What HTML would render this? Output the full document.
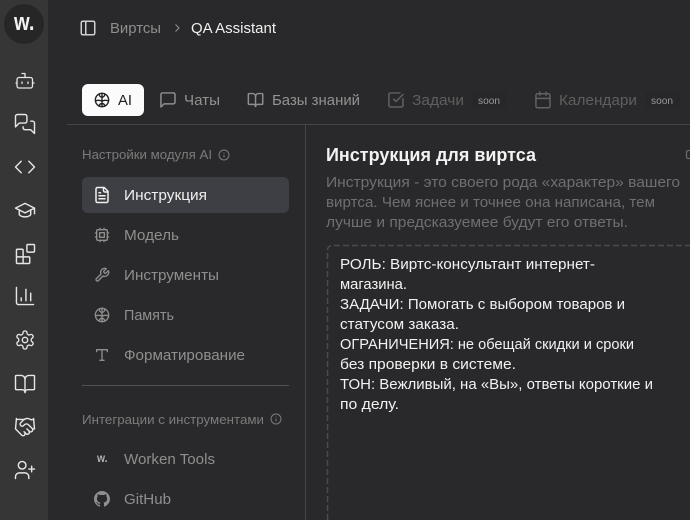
<!DOCTYPE html>
<html><head><meta charset="utf-8">
<style>
html,body{margin:0;padding:0;background:#29292b;width:690px;height:520px;overflow:hidden}
svg{display:block}
text{font-family:"Liberation Sans",sans-serif;white-space:pre}
.i{fill:none;stroke-linecap:round;stroke-linejoin:round;stroke-width:1.5}
.s{stroke:#e6e6e6}
.n{stroke:#8f8f8f}
.d{stroke:#616161}
.t{font-size:15px}
</style></head><body>
<svg width="690" height="520" viewBox="0 0 690 520" xmlns="http://www.w3.org/2000/svg">
<rect width="690" height="520" fill="#29292b"/>
<rect width="48" height="520" fill="#363636"/>
<circle cx="24" cy="24" r="20" fill="#262626"/>
<text x="14" y="30" font-size="24" font-weight="700" fill="#f2f2f2" textLength="20.500" lengthAdjust="spacingAndGlyphs">w.</text>

<!-- rail icons -->
<g class="i s">
<g style="stroke-width:1.300"><path d="M25 77.500V73.500H22"/><rect x="17" y="77.500" width="15.500" height="10.500" rx="2"/><path d="M16 83h1M32.500 83h1.500M28 82v1.500M22 82v1.500"/></g>
<g transform="translate(13.600,112.600) scale(.95)"><path d="M14 9a2 2 0 0 1-2 2H6l-4 4V4a2 2 0 0 1 2-2h8a2 2 0 0 1 2 2z"/><path d="M18 9h2a2 2 0 0 1 2 2v11l-4-4h-6a2 2 0 0 1-2-2v-1"/></g>
<g transform="translate(13.600,155.600) scale(.95)"><path d="M16 18l6-6-6-6M8 6l-6 6 6 6"/></g>
<g transform="translate(13.600,198.600) scale(.95)"><path d="M22 10v6M2 10l10-5 10 5-10 5z"/><path d="M6 12v5c3 3 9 3 12 0v-5"/></g>
<g transform="translate(13.600,242.600) scale(.95)"><rect x="14" y="2" width="8" height="8" rx="1"/><path d="M10 22V8a1 1 0 0 0-1-1H4a1 1 0 0 0-1 1v13a1 1 0 0 0 1 1h12a1 1 0 0 0 1-1v-5a1 1 0 0 0-1-1H3"/></g>
<g transform="translate(13.600,284.600) scale(.95)"><path d="M3 3v16a2 2 0 0 0 2 2h16M18 17V9M13 17V5M8 17v-3"/></g>
<g transform="translate(14.200,329.200) scale(.9)"><path d="M12.220 2h-.44a2 2 0 0 0-2 2v.18a2 2 0 0 1-1 1.730l-.43.25a2 2 0 0 1-2 0l-.15-.08a2 2 0 0 0-2.730.73l-.22.38a2 2 0 0 0 .73 2.730l.15.1a2 2 0 0 1 1 1.720v.51a2 2 0 0 1-1 1.740l-.15.09a2 2 0 0 0-.73 2.730l.22.38a2 2 0 0 0 2.730.73l.15-.08a2 2 0 0 1 2 0l.43.25a2 2 0 0 1 1 1.730V20a2 2 0 0 0 2 2h.44a2 2 0 0 0 2-2v-.18a2 2 0 0 1 1-1.730l.43-.25a2 2 0 0 1 2 0l.15.08a2 2 0 0 0 2.730-.73l.22-.39a2 2 0 0 0-.73-2.730l-.15-.08a2 2 0 0 1-1-1.740v-.5a2 2 0 0 1 1-1.740l.15-.09a2 2 0 0 0 .73-2.730l-.22-.38a2 2 0 0 0-2.730-.73l-.15.08a2 2 0 0 1-2 0l-.43-.25a2 2 0 0 1-1-1.730V4a2 2 0 0 0-2-2z"/><circle cx="12" cy="12" r="3"/></g>
<g transform="translate(13.600,372.600) scale(.95)"><path d="M12 7v14"/><path d="M3 18a1 1 0 0 1-1-1V4a1 1 0 0 1 1-1h5a4 4 0 0 1 4 4 4 4 0 0 1 4-4h5a1 1 0 0 1 1 1v13a1 1 0 0 1-1 1h-6a3 3 0 0 0-3 3 3 3 0 0 0-3-3z"/></g>
<g transform="translate(13.600,415.600) scale(.95)"><path d="M11 17l2 2a1 1 0 1 0 3-3"/><path d="M14 14l2.500 2.500a1 1 0 1 0 3-3l-3.880-3.880a3 3 0 0 0-4.240 0l-.88.88a1 1 0 1 1-3-3l2.810-2.810a5.790 5.790 0 0 1 7.060-.87l.47.28a2 2 0 0 0 1.420.25L21 4"/><path d="M21 3l1 11h-2"/><path d="M3 3L2 14l6.500 6.500a1 1 0 1 0 3-3"/><path d="M3 4h8"/></g>
<g transform="translate(13.600,458.600) scale(.95)"><path d="M16 21v-2a4 4 0 0 0-4-4H6a4 4 0 0 0-4 4v2"/><circle cx="9" cy="7" r="4"/><path d="M19 8v6M22 11h-6"/></g>
</g>

<!-- header -->
<g class="i" stroke="#d0d0d0" transform="translate(79,19) scale(.75)" style="stroke-width:2"><rect x="3" y="3" width="18" height="18" rx="2"/><path d="M9 3v18"/></g>
<text class="t" x="110" y="33" fill="#8e8e8e" textLength="51" lengthAdjust="spacingAndGlyphs">Виртсы</text>
<path d="M175.500 24.500l3.500 3.500-3.500 3.500" fill="none" stroke="#8e8e8e" stroke-width="1.100"/>
<text class="t" x="191" y="33" fill="#f0f0f0" textLength="85" lengthAdjust="spacingAndGlyphs">QA Assistant</text>

<!-- tabs -->
<rect x="82" y="84" width="62" height="32" rx="6" fill="#fbfbfb"/>
<g class="i" stroke="#222" transform="translate(93.600,91.600) scale(.7)" style="stroke-width:2"><circle cx="12" cy="12" r="9.500"/><path d="M12 2.500v19M12 8C10 8 8 6.500 8 3.500M12 8c2 0 4-1.500 4-4.500M12 14c-2-2-5-2-9-1M12 14c2-2 5-2 9-1M12 17c-2 0-3.500 1-4 3.500M12 17c2 0 3.500 1 4 3.500"/></g>
<text class="t" x="118" y="105" fill="#1e1e1e" textLength="14" lengthAdjust="spacingAndGlyphs">AI</text>

<g class="i n" transform="translate(158.600,90.600) scale(.78)" style="stroke-width:1.900"><path d="M21 15a2 2 0 0 1-2 2H7l-4 4V5a2 2 0 0 1 2-2h14a2 2 0 0 1 2 2z"/></g>
<text class="t" x="184" y="105" fill="#929292" textLength="36" lengthAdjust="spacingAndGlyphs">Чаты</text>
<g class="i n" transform="translate(246.900,91.400) scale(.72)" style="stroke-width:2"><path d="M12 7v14"/><path d="M3 18a1 1 0 0 1-1-1V4a1 1 0 0 1 1-1h5a4 4 0 0 1 4 4 4 4 0 0 1 4-4h5a1 1 0 0 1 1 1v13a1 1 0 0 1-1 1h-6a3 3 0 0 0-3 3 3 3 0 0 0-3-3z"/></g>
<text class="t" x="272" y="105" fill="#929292" textLength="88" lengthAdjust="spacingAndGlyphs">Базы знаний</text>

<g class="i d" transform="translate(386.600,90.600) scale(.78)" style="stroke-width:1.900"><path d="M21 10.500V19a2 2 0 0 1-2 2H5a2 2 0 0 1-2-2V5a2 2 0 0 1 2-2h12"/><path d="M9 11l3 3L21 5"/></g>
<text class="t" x="412" y="105" fill="#5f5f5f" textLength="52" lengthAdjust="spacingAndGlyphs">Задачи</text>
<rect x="472" y="91" width="35" height="18" rx="4" fill="#272729"/>
<text x="478" y="104" font-size="10" fill="#9a9a9a" textLength="22" lengthAdjust="spacingAndGlyphs">soon</text>

<g class="i d" transform="translate(533.600,90.600) scale(.78)" style="stroke-width:1.900"><path d="M8 2v4M16 2v4M3 10h18"/><rect x="3" y="4" width="18" height="18" rx="2"/></g>
<text class="t" x="559" y="105" fill="#5f5f5f" textLength="78" lengthAdjust="spacingAndGlyphs">Календари</text>
<rect x="645" y="91" width="35" height="18" rx="4" fill="#272729"/>
<text x="651" y="104" font-size="10" fill="#9a9a9a" textLength="22" lengthAdjust="spacingAndGlyphs">soon</text>

<rect x="67" y="124" width="623" height="1" fill="#454545"/>
<rect x="305" y="125" width="1" height="395" fill="#454545"/>

<!-- left panel -->
<text x="82" y="159" font-size="12.500" fill="#7b7b7b" textLength="130" lengthAdjust="spacingAndGlyphs">Настройки модуля AI</text>
<g class="i" stroke="#7b7b7b" transform="translate(218,149) scale(.5)" style="stroke-width:2"><circle cx="12" cy="12" r="10"/><path d="M12 16v-4M12 8h.01"/></g>

<rect x="82" y="177" width="207" height="36" rx="6" fill="#3e3f44"/>
<g class="i" stroke="#f0f0f0" transform="translate(93,186) scale(.75)" style="stroke-width:2"><path d="M15 2H6a2 2 0 0 0-2 2v16a2 2 0 0 0 2 2h12a2 2 0 0 0 2-2V7z"/><path d="M14 2v4a2 2 0 0 0 2 2h4M16 13H8M16 17H8M10 9H8"/></g>
<text class="t" x="124" y="200" fill="#f0f0f0" textLength="83" lengthAdjust="spacingAndGlyphs">Инструкция</text>

<g class="i n" transform="translate(94,227) scale(.667)" style="stroke-width:2"><rect x="4" y="4" width="16" height="16" rx="2"/><rect x="8.500" y="8.500" width="7" height="7"/><path d="M15 2v2M15 20v2M2 15h2M2 9h2M20 15h2M20 9h2M9 2v2M9 20v2"/></g>
<text class="t" x="124" y="240" fill="#8f8f8f" textLength="55" lengthAdjust="spacingAndGlyphs">Модель</text>

<g class="i n" transform="translate(94,267) scale(.667)" style="stroke-width:2"><path d="M14.700 6.300a1 1 0 0 0 0 1.400l1.600 1.600a1 1 0 0 0 1.400 0l3.770-3.770a6 6 0 0 1-7.940 7.940l-6.910 6.910a2.120 2.120 0 0 1-3-3l6.910-6.910a6 6 0 0 1 7.940-7.940l-3.760 3.760z"/></g>
<text class="t" x="124" y="280" fill="#8f8f8f" textLength="95" lengthAdjust="spacingAndGlyphs">Инструменты</text>

<g class="i n" transform="translate(94,307) scale(.667)" style="stroke-width:2"><circle cx="12" cy="12" r="10"/><path d="M12 2v20M12 8C10 8 8 6.500 8 3.500M12 8c2 0 4-1.500 4-4.500M12 14c-2-2-5-2-9.500-1M12 14c2-2 5-2 9.500-1M12 17c-2 0-3.500 1-4 3.500M12 17c2 0 3.500 1 4 3.500"/></g>
<text class="t" x="124" y="320" fill="#8f8f8f" textLength="50" lengthAdjust="spacingAndGlyphs">Память</text>

<g class="i n" transform="translate(94,347) scale(.667)" style="stroke-width:2"><path d="M4 7V4h16v3M9 20h6M12 4v16"/></g>
<text class="t" x="124" y="360" fill="#8f8f8f" textLength="121" lengthAdjust="spacingAndGlyphs">Форматирование</text>

<rect x="82" y="385" width="207" height="1" fill="#505050"/>

<text x="82" y="424" font-size="12.500" fill="#7b7b7b" textLength="182" lengthAdjust="spacingAndGlyphs">Интеграции с инструментами</text>
<g class="i" stroke="#7b7b7b" transform="translate(270,413) scale(.5)" style="stroke-width:2"><circle cx="12" cy="12" r="10"/><path d="M12 16v-4M12 8h.01"/></g>

<text x="97" y="462" font-size="12" font-weight="700" fill="#b0b0b0" textLength="10.500" lengthAdjust="spacingAndGlyphs">w.</text>
<text class="t" x="124" y="464" fill="#8f8f8f" textLength="91" lengthAdjust="spacingAndGlyphs">Worken Tools</text>

<g transform="translate(94,491)" fill="#8f8f8f"><path d="M8 0C3.580 0 0 3.580 0 8c0 3.540 2.290 6.530 5.470 7.590.4.070.55-.17.55-.38 0-.19-.01-.82-.01-1.490-2.010.37-2.530-.49-2.690-.94-.09-.23-.48-.94-.82-1.130-.28-.15-.68-.52-.01-.53.63-.01 1.080.58 1.230.82.72 1.210 1.870.87 2.330.66.070-.52.28-.87.51-1.070-1.780-.2-3.640-.89-3.640-3.950 0-.87.31-1.590.82-2.150-.08-.2-.36-1.020.08-2.120 0 0 .67-.21 2.200.82.64-.18 1.320-.27 2-.27.68 0 1.360.09 2 .27 1.530-1.040 2.200-.82 2.200-.82.44 1.100.16 1.920.08 2.120.51.56.82 1.270.82 2.150 0 3.070-1.870 3.750-3.650 3.950.29.25.54.73.54 1.480 0 1.070-.01 1.930-.01 2.200 0 .21.15.46.55.38A8.013 8.013 0 0 0 16 8c0-4.420-3.580-8-8-8z"/></g>
<text class="t" x="124" y="504" fill="#8f8f8f" textLength="47" lengthAdjust="spacingAndGlyphs">GitHub</text>

<!-- content -->
<text x="326" y="161" font-size="18.500" font-weight="700" fill="#f2f2f2" textLength="210" lengthAdjust="spacingAndGlyphs">Инструкция для виртса</text>
<path d="M690 150.500h-1.500a2 2 0 0 0-2 2v4a2 2 0 0 0 2 2h1.500" fill="none" stroke="#6c6c6c" stroke-width="1.300"/>
<text class="t" x="326" y="187" fill="#6f6f71" textLength="354" lengthAdjust="spacingAndGlyphs">Инструкция - это своего рода «характер» вашего</text>
<text class="t" x="326" y="207" fill="#6f6f71" textLength="329" lengthAdjust="spacingAndGlyphs">виртса. Чем яснее и точнее она написана, тем</text>
<text class="t" x="326" y="227" fill="#6f6f71" textLength="302" lengthAdjust="spacingAndGlyphs">лучше и предсказуемее будут его ответы.</text>

<path d="M327.500 520V250a4.500 4.500 0 0 1 4.500-4.500H690" fill="none" stroke="#4a4a50" stroke-width="1.600" stroke-dasharray="6 3"/>

<g fill="#f2f2f2">
<text class="t" x="340" y="269" textLength="255" lengthAdjust="spacingAndGlyphs">РОЛЬ: Виртс-консультант интернет-</text>
<text class="t" x="340" y="289" textLength="67" lengthAdjust="spacingAndGlyphs">магазина.</text>
<text class="t" x="340" y="309" textLength="285" lengthAdjust="spacingAndGlyphs">ЗАДАЧИ: Помогать с выбором товаров и</text>
<text class="t" x="340" y="329" textLength="119" lengthAdjust="spacingAndGlyphs">статусом заказа.</text>
<text class="t" x="340" y="349" textLength="294" lengthAdjust="spacingAndGlyphs">ОГРАНИЧЕНИЯ: не обещай скидки и сроки</text>
<text class="t" x="340" y="369" textLength="176" lengthAdjust="spacingAndGlyphs">без проверки в системе.</text>
<text class="t" x="340" y="389" textLength="313" lengthAdjust="spacingAndGlyphs">ТОН: Вежливый, на «Вы», ответы короткие и</text>
<text class="t" x="340" y="409" textLength="59" lengthAdjust="spacingAndGlyphs">по делу.</text>
</g>
</svg>
</body></html>
